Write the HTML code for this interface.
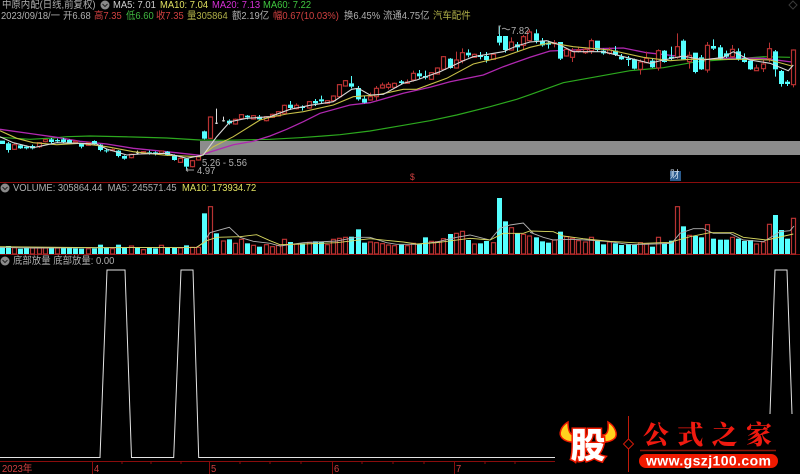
<!DOCTYPE html>
<html><head><meta charset="utf-8">
<style>
html,body{margin:0;padding:0;background:#000}
#r{position:relative;width:800px;height:474px;overflow:hidden;background:#000;font:10px/12px "Liberation Sans","Noto Sans CJK SC",sans-serif;color:#a8a8a8}
#r span{position:absolute;white-space:nowrap;transform:scaleX(.94);transform-origin:0 0;filter:blur(.3px)}
svg{position:absolute;left:0;top:0}
#c,#t{filter:blur(.35px)}
.g{color:#b0b0b0}.w{color:#d0d0d0}.y{color:#e0e060}.m{color:#d830d8}.n{color:#40c840}.r{color:#d04040}.l{color:#40b840}.o{color:#b0b048}
</style></head><body><div id="r">
<svg id="s" width="800" height="474" viewBox="0 0 800 474">
<g id="t">
<rect x="200" y="141" width="600" height="14" fill="#8c8c8c"/>
<rect x="0" y="182" width="800" height="1" fill="#8a0c0c"/>
<rect x="0" y="254" width="800" height="1" fill="#8a0c0c"/>
<rect x="0" y="461" width="800" height="1" fill="#8a0c0c"/>
</g>
<g id="c"></g>
<polyline fill="none" stroke="#e4e4e4" stroke-width="1" points="0,457.5 100,457.5 107,270 125,270 131.500,457.5 173.700,457.5 181,270 193,270 198.700,457.5 560,457.5"/>
<polyline fill="none" stroke="#e4e4e4" stroke-width="1" points="770,414 775,270 787,270 792,414"/>
<g fill="#8a8a8a"><circle cx="105" cy="5" r="4.5"/><circle cx="5" cy="188" r="4.5"/><circle cx="5" cy="261" r="4.5"/></g>
<g fill="none" stroke="#222" stroke-width="1"><path d="M102.500 4l2.500 2.500 2.500-2.500M2.500 187l2.500 2.500 2.500-2.500M2.500 260l2.500 2.500 2.500-2.500"/></g>
<path d="M793 1l4 4-4 4-4-4z" fill="none" stroke="#3a3a3a"/>
<path d="M186 170h8M186 170l2-1.500M186 170l2 1.500" stroke="#a0a0a0" fill="none"/>
<path d="M499 34v-8h2M502 29q2-1.500 4 0t4 0" stroke="#a0a0a0" fill="none"/>
<path d="M92.500 461v13M209.500 461v13M332.500 461v13M454.500 461v13" stroke="#8a0c0c"/>
<path d="M122 462v2M151 462v2M181 462v2M240 462v2M270 462v2M301 462v2M362 462v2M393 462v2M424 462v2M485 462v2M515 462v2" stroke="#8a0c0c"/>
<rect x="670" y="171" width="11" height="10" fill="#2a5a8c"/>
<rect x="555" y="414" width="245" height="60" fill="#000"/>
<path d="M568 422C561 426 558 434 562 438C565 441 569 442 573 442L574 435C570 435 568 431 568 422z" fill="#ffd21e" stroke="#f01a00" stroke-width="1.500"/>
<path d="M608 422C615 426 618 434 615 438C612 441 608 442 604 442L603 435C607 435 609 431 608 422z" fill="#ffd21e" stroke="#f01a00" stroke-width="1.500"/>
<text x="588" y="458" text-anchor="middle" font-family="Noto Sans CJK SC,sans-serif" font-weight="900" font-size="35" fill="#fff" stroke="#f01a00" stroke-width="3" paint-order="stroke">股</text>
<path d="M628.500 416v56" stroke="#c01a0a"/>
<path d="M628.500 439l5 5-5 5-5-5z" fill="#000" stroke="#d01a0a"/>
<text x="643" y="444" font-family="Noto Serif CJK SC,serif" font-weight="900" font-size="26" fill="#f01a10" textLength="129">公式之家</text>
<path d="M640 450.500h136" stroke="#8a1408" stroke-width="1.500"/>
<rect x="639" y="454" width="139" height="14" rx="7" fill="#f01a00"/>
<text x="708.500" y="465.500" text-anchor="middle" font-family="Liberation Sans,sans-serif" font-weight="700" font-size="14" fill="#fff" textLength="125">www.gszj100.com</text>
</svg>
<span class="g" style="left:2px;top:0">中原内配(日线,前复权)</span>
<span class="w" style="left:113px;top:0">MA5: 7.01</span>
<span class="y" style="left:160px;top:0">MA10: 7.04</span>
<span class="m" style="left:212px;top:0">MA20: 7.13</span>
<span class="n" style="left:263px;top:0">MA60: 7.22</span>
<span class="g" style="left:1px;top:11px">2023/09/18/一</span>
<span class="g" style="left:63px;top:11px">开6.68</span>
<span class="r" style="left:94px;top:11px">高7.35</span>
<span class="l" style="left:126px;top:11px">低6.60</span>
<span class="r" style="left:156px;top:11px">收7.35</span>
<span class="o" style="left:187px;top:11px">量305864</span>
<span class="g" style="left:232px;top:11px">额2.19亿</span>
<span class="r" style="left:273px;top:11px">幅0.67(10.03%)</span>
<span class="g" style="left:344px;top:11px">换6.45%</span>
<span class="g" style="left:383px;top:11px">流通4.75亿</span>
<span class="o" style="left:433px;top:11px">汽车配件</span>
<span class="g" style="left:201.500px;top:158px">5.26 - 5.56</span>
<span class="g" style="left:196.500px;top:166px">4.97</span>
<span class="g" style="left:510.500px;top:26px">7.82</span>
<span class="r" style="left:410px;top:171px;font-size:9px">$</span>
<span style="left:670px;top:170px;color:#d0e0f0">财</span>
<span class="g" style="left:13px;top:183px">VOLUME: 305864.44&nbsp; MA5: 245571.45</span>
<span class="y" style="left:182px;top:183px">MA10: 173934.72</span>
<span class="g" style="left:13px;top:256px">底部放量 底部放量: 0.00</span>
<span class="r" style="left:2px;top:464px">2023年</span>
<span class="r" style="left:94px;top:464px">4</span>
<span class="r" style="left:211px;top:464px">5</span>
<span class="r" style="left:334px;top:464px">6</span>
<span class="r" style="left:456px;top:464px">7</span>
</div>
<script>
var R='#b83232',C='#55ffff',W='#e0e0e0';
function X(i){return 1.7+6.136*i}
var c=[
'c422 432 422 432','c430 450 426 458','r434 448 430 450','c436 445 434 447','c440 445 436 448','c438 445 434 448','r428 440 426 444','r419 425 417 427','c418 426 414 430','c420 424 416 428','c418 426 414 430','c420 428 418 430','r424 428 422 430','c432 440 430 445','r428 436 426 438','c423 432 421 436','c434 450 432 454','c451 453 446 458','r449 452 446 454','c452 468 450 472','c468 476 466 479','r463 473 461 475','w457 459 452 464','r455 459 453 461','c457 459 452 464','c457 463 454 466','r453 460 451 462','c455 466 453 468','c465 480 463 482','r475 487 473 489','c476 500 474 512','r482 500 480 502','r470 480 468 482','c394 416 392 418','r351 415 349 417','w368 370 326 372','w361 363 350 365','c362 370 358 374','r358 372 356 374','r344 356 342 358','c347 352 345 358','r347 357 345 359','c350 358 345 362','r350 362 348 364',
'r343 352 341 354','r335 348 333 350','r316 340 314 342','c314 324 303 330','r316 326 310 328','c320 324 316 332','r305 324 303 326','c303 310 297 318','c298 304 287 312','r302 310 300 312','r288 302 286 304','r254 290 252 292','r242 258 240 260','c250 260 228 265','c264 298 258 302','c296 308 288 310','r290 300 278 302','r265 290 258 302','r255 264 248 266','r253 262 246 268','r250 262 248 264','c244 249 240 254','r246 250 238 252','r220 240 212 245','c220 229 210 236','c228 233 212 238','r218 238 216 240','r204 222 202 224','r170 208 168 210','c176 204 174 206','r180 204 155 206','r158 182 145 190','c158 166 148 172','r163 172 161 174','c165 171 156 178','c168 180 156 188','r163 178 161 180','c108 128 80 136','c108 150 108 158','r126 150 112 152','c133 142 126 156','r110 136 105 148','r96 122 88 124','c100 122 88 130',
'c122 136 114 140','c128 134 122 146','r128 130 120 142','c126 176 126 180','r148 168 146 170','r154 172 144 186','r150 153 140 158','r148 158 142 162','r122 152 116 162','c122 150 122 156','c152 160 146 164','r150 160 142 164','c152 164 138 168','c170 178 162 180','c176 180 168 198','c178 206 176 208','r186 208 178 224','r175 188 155 190','c182 202 175 204','r152 204 148 212','c152 186 150 188','c170 176 140 182','r140 172 100 176','c122 178 118 180','r166 185 155 206','c158 216 158 220','c172 208 165 210','r136 210 126 218','c138 146 118 150','c142 176 135 180','c160 170 152 174','r148 170 135 172','c154 178 145 182','c174 186 160 188','c182 208 180 210','r204 212 194 212','r192 206 180 216','r146 176 128 186','c154 208 150 230','c213 252 210 260','c245 252 240 258','r150 254 148 262'];
var v=[
'c200','c198','r203','c206','c202','r204','r204','r204','c203','r204','c204','c204','c205','c206','r206','c205','c194','c203','r206','c194','c202','r198','c203','r209','c204','c205','r196','c203','c204','r204','c196','r202','r202','c100','r80','c160','r183','c178','r190','r178','c190','r196','c200','r194',
'r200','r196','r178','c186','r192','c190','r187','c184','c186','r194','r178','r175','r172','c170','c148','c188','r186','r188','r191','r195','r197','c194','r197','r190','c192','c172','r184','r185','r176','c162','r160','r154','c180','r192','c190','c183','r188','c54','c124','r143','c160','r163','r168','c172',
'c184','c188','r180','c155','r170','r175','r182','r186','r172','c182','c193','r186','c190','c195','c192','c194','r188','r192','c200','r172','c190','c182','r80','c139','r166','c168','c172','r134','c176','c179','c179','r172','c176','c183','c180','r192','r186','r133','c105','c150','c176','r115'];
var h='';
function L(x1,y1,x2,y2,col){return '<line x1="'+x1+'" y1="'+y1+'" x2="'+x2+'" y2="'+y2+'" stroke="'+col+'"/>'}
function P(col,w,segs){var p=[];segs.forEach(function(s){var ox=s[0],oy=s[1],a=s[2];for(var i=0;i<a.length;i+=2)p.push((ox+a[i]/3).toFixed(1)+','+(oy+a[i+1]/3).toFixed(1))});
return '<polyline fill="none" stroke="'+col+'" stroke-width="'+w+'" points="'+p.join(' ')+'"/>'}
h+=P('#2ca81e',1.2,[[0,0,[0,412,90,418,160,414,200,410,270,408,400,411,500,414,600,420,680,421]],[270,0,[0,418,90,413,160,408,210,404,300,393,400,376,480,362,560,345,660,320,740,298]],[530,0,[0,284,100,248,200,230,300,212,400,203,500,185,600,178,700,170,780,172]]]);
h+=P('#b028b0',1.3,[[0,0,[0,388,100,402,170,412,240,424,320,432,400,445,500,455,600,466,640,453,700,434,760,424]],[270,0,[0,408,50,388,100,365,150,340,240,315,300,308,400,280,480,262,540,245,640,225,700,200]],[530,0,[0,172,60,153,130,150,200,146,280,144,350,158,440,168,520,178,600,174,700,175,785,186]]]);
c.forEach(function(d,i){var k=d[0],col=k=='r'?R:k=='w'?W:C,a=d.slice(1).split(' ').map(function(n){return n/3}),xr=Math.round(X(i));
h+=L(xr+.5,a[2],xr+.5,a[0],col)+L(xr+.5,a[1],xr+.5,a[3],col);
if(k=='r')h+='<rect x="'+(xr-1.5)+'" y="'+a[0]+'" width="4" height="'+Math.max(a[1]-a[0],1)+'" fill="#000" stroke="'+R+'" stroke-width="1.2"/>';
else if(k=='w')h+='<rect x="'+(xr-1)+'" y="'+a[0]+'" width="3" height="1" fill="'+W+'"/>';
else h+='<rect x="'+(xr-2)+'" y="'+a[0]+'" width="5" height="'+Math.max(a[1]-a[0],1)+'" fill="'+C+'"/>';});
h+=P('#c8c048',1.1,[[0,0,[0,392,50,415,100,428,170,434,240,430,320,440,400,455,500,466,600,470,640,440,700,410,780,360]],[270,0,[0,352,50,342,100,335,190,315,250,290,320,285,400,268,440,268,530,235,610,192,700,170]],[530,0,[0,142,60,128,130,140,240,150,340,172,420,182,480,178,550,178,650,178,720,180,785,198]]]);
h+=P('#d8d8d8',1.1,[[0,0,[0,410,40,428,100,443,170,428,240,430,290,432,320,447,380,465,420,462,500,460,560,475,610,465,650,410,690,365,740,355]],[270,0,[0,350,60,328,120,316,190,305,245,268,265,265,300,285,340,283,400,250,440,240,510,215,580,182,610,170,700,155,740,138]],[530,0,[0,126,50,122,90,135,130,155,170,155,220,155,300,175,360,190,400,180,460,168,520,180,580,172,610,155,660,180,720,190,775,212,790,195]]]);
var base=254;
v.forEach(function(d,i){var t=180+d.slice(1)/3,xr=Math.round(X(i));
if(d[0]=='r')h+='<rect x="'+(xr-1.5)+'" y="'+t+'" width="4" height="'+(base-t)+'" fill="#000" stroke="'+R+'" stroke-width="1.2"/>';
else h+='<rect x="'+(xr-2)+'" y="'+t+'" width="5" height="'+(base-t)+'" fill="'+C+'"/>';});
h+=P('#b0b0b0',.9,[[0,180,[0,202,100,204,300,203,590,202,610,188,630,158,688,142,720,172,760,184]],[270,180,[0,190,30,198,100,188,200,183,260,172,300,172,350,188,380,193,440,193,500,186,560,172,600,165,660,180,690,145,720,135,760,129,790,160]],[530,180,[0,157,40,172,70,180,120,178,170,180,240,185,300,194,370,192,425,190,450,160,490,146,520,146,550,160,600,160,640,180,700,185,750,155,780,152,792,138]]]);
h+=P('#d8d860',.9,[[0,180,[0,200,300,203,590,202,620,182,650,172,720,170,770,164]],[270,180,[0,182,30,194,100,192,200,188,300,176,400,186,440,192,500,188,600,175,660,180,700,160,760,160]],[530,180,[0,153,70,155,100,168,160,176,240,184,340,190,420,187,480,170,540,158,610,158,640,172,710,180,790,162]]]);
document.getElementById('c').innerHTML=h;
</script>
</body></html>
